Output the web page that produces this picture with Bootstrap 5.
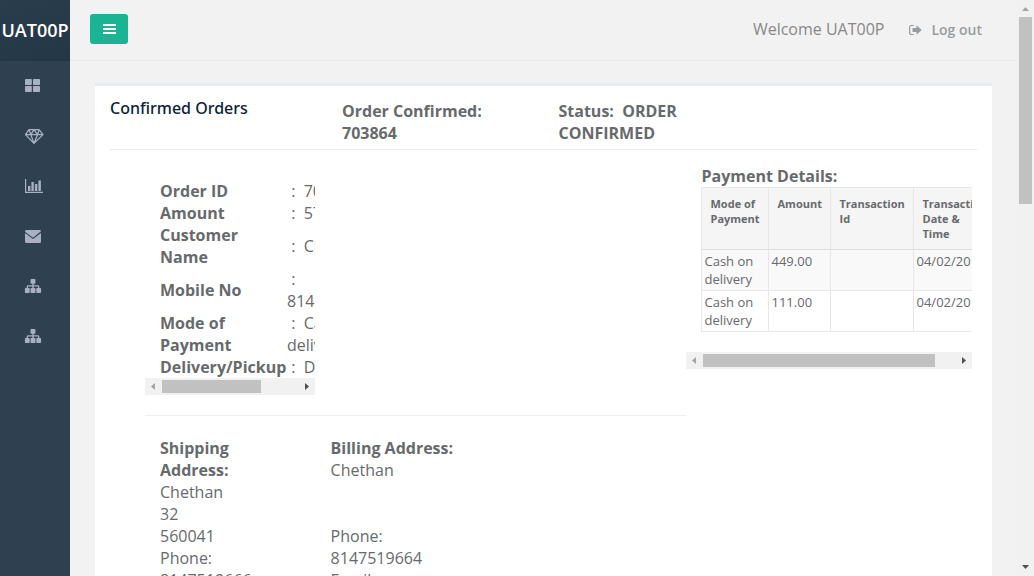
<!DOCTYPE html>
<html lang="en">
<head>
<meta charset="utf-8">
<meta name="viewport" content="width=device-width, initial-scale=1">
<title>Confirmed Orders</title>
<link href="https://cdn.jsdelivr.net/npm/bootstrap@5.3.0/dist/css/bootstrap.min.css" rel="stylesheet">
<style>
body{font-family:"Open Sans",sans-serif;font-size:16px;line-height:22px;color:#676a6c;background:#f3f3f4}
b,th{font-weight:700}
.app{background:#f2f2f2}
.side{width:70px;background:#2f4050;color:#a7b1c2}
.brand{height:61px;padding-bottom:2px;font-size:18px;color:#fff;background:linear-gradient(160deg,#2a3d4d,#243747);font-weight:600;white-space:nowrap}
.side-link{height:50px;padding-left:24px}
.side svg,.topbar svg{display:block;fill:currentColor}
.topbar{height:61px;border-bottom:1px solid #e7eaec}
.toggle{width:38px;height:30px;margin:14px 0 0 20px;background:#1ab394;border-radius:3px;color:#fff;padding:0 0 0 13px}
.welcome{color:#888;margin:18px 24px 0 0}
.logout{color:#999c9e;font-size:14px;font-weight:600;margin:19px 35px 0 0}
.panel{margin:22px 25px 0;border-top:3px solid #e7eaec;padding:0 15px;height:700px}
.panel-head{height:64px;border-bottom:1px solid #e7eaec}
.panel-title{width:232px;padding-top:11px;color:#0b2239;font-family:"Noto Sans","Open Sans",sans-serif;font-weight:500}
.head-cell{padding-top:14px;width:216.5px}
.body-left{width:541px;margin-left:35px}
.body-right{width:286px;padding-top:15px}
.scroll-box{width:170px;height:228px;padding:30px 0 0 15px}
.facts{width:220px;line-height:22px}
.facts th,.facts td{padding:0;vertical-align:middle}
.facts td{white-space:pre}
.sbar{height:17px;background:#f1f1f1;position:relative}
.sbar .thumb{height:13px;background:#c1c1c1}
.arrow{width:17px;height:17px;flex:none}
.divider{height:1px;background:#eee;margin-top:20px}
.address{padding:21px 0 0 15px}
.ship{width:170.6px;padding-right:60px}
.pay-wrap{padding-left:15px;height:165px}
.pay{width:330px;table-layout:fixed;border-collapse:collapse;font-size:13px;line-height:18px}
.pay th,.pay td{border:1px solid #e7e7e7;vertical-align:top}
.pay th{background:#f5f5f6;font-size:11px;line-height:15px;height:62px;padding:8px 8px 8px 8.500px;border-bottom-color:#ddd}
.pay td{padding:2px 2px 2px 2.500px;height:41px}
.pay tr.odd td{background:#f9f9f9}
.vbar{width:17px;background:#f1f1f1}
.vbar .thumb{width:13px;height:187px;background:#c1c1c1}
</style>
</head>
<body class="overflow-hidden">
<div class="app d-flex vh-100 overflow-hidden">
  <nav class="side flex-shrink-0">
    <div class="brand d-flex align-items-center justify-content-center">UAT00P</div>
    <div class="side-link d-flex align-items-center"><svg width="18" height="18"><path d="M1.800 2H7q.800 0 .800.800v4.400q0 .800-.800.800H1.800Q1 8 1 7.200V2.800Q1 2 1.800 2zM9.800 2H15.200q.800 0 .800.800v4.400q0 .800-.800.800H9.800Q9 8 9 7.200V2.800Q9 2 9.800 2zM1.800 9H7q.800 0 .800.800v4.400q0 .800-.800.800H1.800Q1 15 1 14.200V9.800Q1 9 1.800 9zM9.800 9H15.200q.800 0 .800.800v4.400q0 .800-.800.800H9.800Q9 15 9 14.200V9.800Q9 9 9.800 9z"/></svg></div>
    <div class="side-link d-flex align-items-center"><svg width="20" height="18" style="fill:none" stroke="currentColor" stroke-width="1.300" stroke-linejoin="round"><path d="M5 2.600h10l4 5L10 16.400 1.500 7.600zM1.500 7.600H19M5 2.600l1.800 5L10 16.400l3.600-8.800L15 2.600M6.800 7.600L10 2.600l3.600 5"/></svg></div>
    <div class="side-link d-flex align-items-center"><svg width="20" height="18"><path d="M1 2h1.200v12.800H19V16H1zM4 9h2.400v5H4zM7.400 5h2.400v9H7.400zM10.900 7h2.400v7h-2.400zM14.400 3.500h2.500V14h-2.500z"/></svg></div>
    <div class="side-link d-flex align-items-center"><svg width="18" height="18"><path d="M2.500 3h13Q17 3 17 4.300L9 10.800 1 4.800V4.500Q1 3 2.500 3zM1 6l8 6 8-6v8.500Q17 16 15.500 16h-13Q1 16 1 14.500z"/></svg></div>
    <div class="side-link d-flex align-items-center"><svg width="18" height="18"><path id="tree" d="M7.300 2h3.400q.700 0 .700.700v3.300q0 .800-.700.800h-1V8.200H14q1.300 0 1.300 1.200v1.500h1q.800 0 .800.800v3.500q0 .800-.800.800h-3.200q-.800 0-.800-.800v-3.500q0-.800.800-.800h.900V9.500H9.700v1.400h1q.800 0 .800.800v3.500q0 .800-.800.800H7.300q-.800 0-.800-.800v-3.500q0-.800.800-.800h1V9.500H4v1.400h.900q.800 0 .800.800v3.500q0 .800-.800.800H1.700q-.800 0-.800-.800v-3.500q0-.800.800-.800h1V9.400Q2.700 8.200 4 8.200h4.300V6.800h-1q-.800 0-.800-.800V2.700q0-.700.800-.700z"/></svg></div>
    <div class="side-link d-flex align-items-center"><svg width="18" height="18"><use href="#tree"/></svg></div>
  </nav>
  <main class="flex-grow-1">
    <header class="topbar d-flex">
      <button class="toggle btn border-0 d-flex align-items-center me-auto" aria-label="Menu"><svg width="13" height="12"><path d="M0 1h13v2H0zM0 5h13v2H0zM0 9h13v2H0z"/></svg></button>
      <span class="welcome">Welcome UAT00P</span>
      <a class="logout d-flex text-decoration-none"><svg class="me-2" width="15" height="22"><path d="M5.800 6.500H3.500Q1.600 6.500 1.600 8.500v5q0 2 1.900 2h2.300" fill="none" stroke="currentColor" stroke-width="1.200"/><path d="M4.500 9h4V6.300l5.200 4.700-5.200 4.700V13h-4z"/></svg>Log out</a>
    </header>
    <section class="panel bg-white">
      <div class="panel-head d-flex">
        <div class="panel-title">Confirmed Orders</div>
        <div class="head-cell pe-5"><b>Order Confirmed: 703864</b></div>
        <div class="head-cell pe-5"><b>Status: &nbsp;ORDER CONFIRMED</b></div>
      </div>
      <div class="d-flex">
        <div class="body-left">
          <div class="scroll-box overflow-hidden">
            <table class="facts">
              <colgroup><col style="width:127px"><col></colgroup>
              <tr><th>Order ID</th><td> :  703864</td></tr>
              <tr><th>Amount</th><td> :  579.00</td></tr>
              <tr><th>Customer<br>Name</th><td> :  Chethan</td></tr>
              <tr><th>Mobile No</th><td> :
8147519664</td></tr>
              <tr><th>Mode of<br>Payment</th><td> :  Cash on
delivery</td></tr>
              <tr><th>Delivery/Pickup</th><td> :  Delivery</td></tr>
            </table>
          </div>
          <div class="sbar d-flex align-items-center" style="width:170px">
            <svg class="arrow"><path d="M10 5v7L6 8.500z" fill="#a3a3a3"/></svg><div class="thumb" style="width:99px"></div><svg class="arrow ms-auto"><path d="M7 5v7l4-3.500z" fill="#505050"/></svg>
          </div>
          <div class="divider"></div>
          <div class="address d-flex">
            <div class="ship"><b>Shipping Address:</b><br>Chethan<br>32<br>560041<br>Phone:<br>8147519666</div>
            <div><b>Billing Address:</b><br>Chethan<br><br><br>Phone:<br>8147519664<br>Email:</div>
          </div>
        </div>
        <div class="body-right">
          <b class="d-block ps-3" style="margin-left:-.5px">Payment Details:</b>
          <div class="pay-wrap overflow-hidden">
            <table class="pay">
              <colgroup><col style="width:67px"><col style="width:62px"><col style="width:83px"><col></colgroup>
              <tr><th>Mode of Payment</th><th>Amount</th><th>Transaction Id</th><th>Transaction<br>Date &amp;<br>Time</th></tr>
              <tr class="odd"><td>Cash on delivery</td><td>449.00</td><td></td><td>04/02/2019</td></tr>
              <tr><td>Cash on delivery</td><td>111.00</td><td></td><td>04/02/2019</td></tr>
            </table>
          </div>
          <div class="sbar d-flex align-items-center">
            <svg class="arrow"><path d="M10 5v7L6 8.500z" fill="#a3a3a3"/></svg><div class="thumb" style="width:232px"></div><svg class="arrow ms-auto"><path d="M7 5v7l4-3.500z" fill="#505050"/></svg>
          </div>
        </div>
      </div>
    </section>
  </main>
  <div class="vbar d-flex flex-column align-items-center flex-shrink-0">
    <svg class="arrow"><path d="M5 11h7L8.500 7z" fill="#a3a3a3"/></svg><div class="thumb"></div><svg class="arrow mt-auto"><path d="M5 6h7l-3.500 4z" fill="#505050"/></svg>
  </div>
</div>
<script src="https://cdn.jsdelivr.net/npm/bootstrap@5.3.0/dist/js/bootstrap.bundle.min.js"></script>
</body>
</html>
